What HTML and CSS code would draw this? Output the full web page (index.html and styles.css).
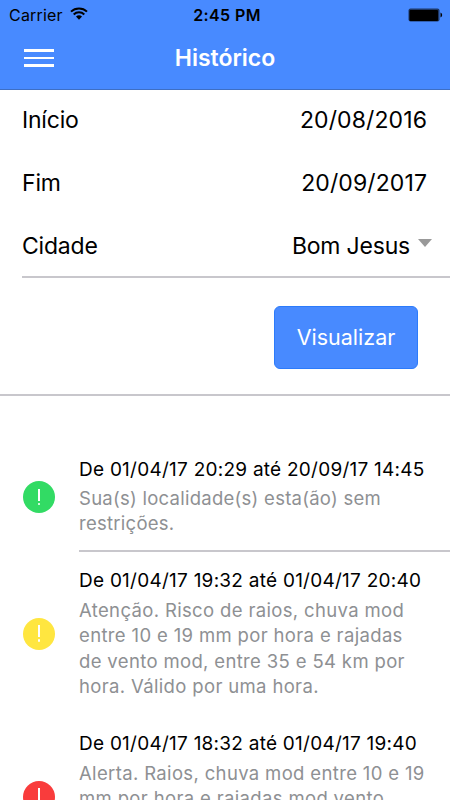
FILE: index.html
```html
<!DOCTYPE html>
<html lang="pt-BR">
<head>
    <meta charset="UTF-8">
    <meta name="viewport" content="width=device-width, initial-scale=1.0">
    <title>Histórico</title>
    <link rel="stylesheet" href="styles.css">
</head>
<body>
    <header class="header">
        <div class="status-bar">
            <div class="carrier">
                <span class="carrier-name">Carrier</span>
                <svg class="wifi" width="18" height="13" viewBox="0 0 18 13">
                    <path d="M1 4.6a11.6 11.6 0 0 1 16 0M3.7 7.4a7.7 7.7 0 0 1 10.6 0" fill="none" stroke="#000" stroke-width="2"/>
                    <path d="M6 9.6a4.3 4.3 0 0 1 6 0L9 12.8z"/>
                </svg>
            </div>
            <span class="time">2:45 PM</span>
            <svg class="battery" width="36" height="14" viewBox="0 0 36 14">
                <rect x="0.5" y="0.5" width="31" height="13" rx="2" fill="#1d3766"/>
                <rect x="1.5" y="2" width="28.5" height="11" rx="1"/>
                <path d="M32.5 4.5a2.7 2.7 0 0 1 0 5z"/>
            </svg>
        </div>
        <div class="nav-bar">
            <button class="menu-button" aria-label="Menu">
                <span></span>
                <span></span>
                <span></span>
            </button>
            <h1>Histórico</h1>
        </div>
    </header>

    <main>
        <form class="filters">
            <div class="field start">
                <span class="label">Início</span>
                <span class="value date">20/08/2016</span>
            </div>
            <div class="field">
                <span class="label">Fim</span>
                <span class="value date">20/09/2017</span>
            </div>
            <div class="field city">
                <span class="label">Cidade</span>
                <span class="value">Bom Jesus</span>
                <span class="arrow"></span>
            </div>
            <div class="actions">
                <button type="button" class="view-button">Visualizar</button>
            </div>
        </form>

        <ul class="history">
            <li class="item first">
                <span class="icon green"></span>
                <div class="content">
                    <h2>De 01/04/17 20:29 até 20/09/17 14:45</h2>
                    <p>Sua(s) localidade(s) esta(ão) sem<br>restrições.</p>
                </div>
            </li>
            <li class="item">
                <span class="icon yellow"></span>
                <div class="content">
                    <h2>De 01/04/17 19:32 até 01/04/17 20:40</h2>
                    <p>Atenção. Risco de raios, chuva mod<br>entre 10 e 19 mm por hora e rajadas<br>de vento mod, entre 35 e 54 km por<br>hora. Válido por uma hora.</p>
                </div>
            </li>
            <li class="item">
                <span class="icon red"></span>
                <div class="content">
                    <h2>De 01/04/17 18:32 até 01/04/17 19:40</h2>
                    <p>Alerta. Raios, chuva mod entre 10 e 19<br>mm por hora e rajadas mod vento</p>
                </div>
            </li>
        </ul>
    </main>
</body>
</html>
```

FILE: styles.css
```css
* {
    box-sizing: border-box;
}
html {
    overflow: hidden;
}
body {
    margin: 0;
    height: 800px;
    overflow: hidden;
    background-color: white;
    color: #000;
    font-family: Inter, "Liberation Sans", sans-serif;
}
h1, h2, p, ul {
    margin: 0;
    padding: 0;
    font-weight: normal;
}
.header {
    height: 90px;
    background-color: #488aff;
    border-bottom: 1px solid #3e6fc4;
}
.status-bar {
    display: grid;
    grid-template-columns: 1fr auto 1fr;
    align-items: center;
    height: 29px;
    padding: 0 6px 0 9px;
}
.carrier {
    display: flex;
    align-items: center;
    gap: 7px;
    font-size: 16px;
    letter-spacing: 0.2px;
}
.wifi {
    margin-top: -2px;
}
.time {
    padding-left: 1px;
    font-size: 16px;
    font-weight: 600;
    letter-spacing: 0.4px;
}
.battery {
    justify-self: end;
}
.nav-bar {
    display: grid;
    grid-template-columns: 54px 1fr 54px;
    align-items: center;
    height: 58px;
}
.menu-button {
    display: flex;
    flex-direction: column;
    gap: 5px;
    width: 54px;
    padding: 0 0 0 24px;
    border: none;
    background: none;
}
.menu-button span {
    width: 30px;
    height: 2.5px;
    background-color: white;
}
h1 {
    color: white;
    text-align: center;
    font-size: 23px;
    font-weight: 600;
}
.field {
    display: flex;
    align-items: center;
    height: 64px;
    padding-right: 23px;
    margin-left: 22px;
    font-size: 23px;
    letter-spacing: -0.2px;
}
.field.start {
    height: 60px;
    margin-bottom: 1px;
}
.label {
    flex: 1;
}
.date {
    letter-spacing: 0.1px;
}
.field.city {
    height: 63px;
    padding-right: 18px;
    border-bottom: 2px solid #c8c7cc;
}
.arrow {
    margin: -5px 0 0 8px;
    border-top: 8px solid #999;
    border-left: 7px solid transparent;
    border-right: 7px solid transparent;
}
.actions {
    display: flex;
    justify-content: flex-end;
    padding: 28px 32px 25px 0;
    border-bottom: 2px solid #c8c7cc;
}
.view-button {
    width: 144px;
    height: 63px;
    padding-bottom: 3px;
    border: 1px solid #2c7bfb;
    border-radius: 6px;
    background-color: #488aff;
    color: white;
    font-family: inherit;
    font-size: 21.5px;
}
.history {
    margin-top: 46px;
    list-style: none;
}
.item {
    display: flex;
    align-items: center;
    gap: 24px;
    height: 163px;
    padding-left: 23px;
}
.item.first {
    height: 110px;
}
.content {
    flex: 1;
    align-self: stretch;
    padding-top: 14px;
    white-space: nowrap;
}
.first .content {
    padding-top: 13px;
    border-bottom: 2px solid #c8c7cc;
}
h2 {
    margin-bottom: 2.5px;
    font-size: 19px;
    line-height: 29px;
    letter-spacing: 0.25px;
}
.first h2 {
    margin-bottom: 1.5px;
}
p {
    color: #8e9093;
    font-size: 18.5px;
    line-height: 25.5px;
    letter-spacing: 0.35px;
}
.first p {
    letter-spacing: 0.26px;
}
.icon {
    display: flex;
    flex-direction: column;
    align-items: center;
    justify-content: center;
    gap: 2px;
    width: 32px;
    height: 32px;
    border-radius: 50%;
}
.icon::before {
    content: "";
    width: 2px;
    height: 12px;
    background-color: white;
}
.icon::after {
    content: "";
    width: 2.5px;
    height: 2.5px;
    border-radius: 50%;
    background-color: white;
}
.green {
    background-color: #32db64;
}
.yellow {
    background-color: #ffe640;
}
.red {
    background-color: #f93c3c;
}
```
